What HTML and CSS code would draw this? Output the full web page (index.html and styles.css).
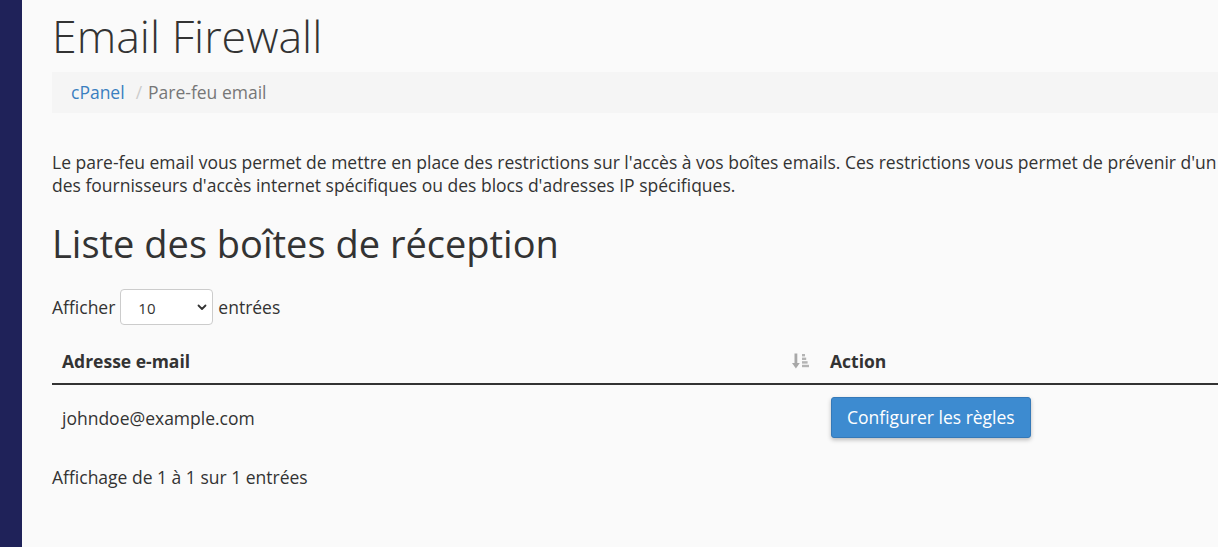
FILE: index.html
```html
<!DOCTYPE html>
<html lang="fr">
<head>
<meta charset="utf-8">
<title>Email Firewall</title>
<link rel="stylesheet" href="styles.css">
</head>
<body>
<div class="layout">
  <aside class="sidebar"></aside>
  <main class="main">
    <h1 class="page-title">Email Firewall</h1>
    <nav class="breadcrumb">
      <a class="crumb-link" href="#">cPanel</a>
      <span class="crumb-sep">/</span>
      <span class="crumb-current">Pare-feu email</span>
    </nav>
    <p class="intro">Le pare-feu email vous permet de mettre en place des restrictions sur l'accès à vos boîtes emails. Ces restrictions vous permet de prévenir d'un accès des fournisseurs d'accès internet spécifiques ou des blocs d'adresses IP spécifiques.</p>
    <h2 class="section-title">Liste des boîtes de réception</h2>
    <div class="length">
      <span>Afficher</span>
      <div class="select">
        <span class="select-value">10</span>
        <svg class="chev" width="10" height="7" viewBox="0 0 10 7"><path d="M1.5 1.5 L5 5 L8.5 1.5" fill="none" stroke="#333" stroke-width="1.8" stroke-linecap="round" stroke-linejoin="round"/></svg>
      </div>
      <span>entrées</span>
    </div>
    <div class="table">
      <div class="thead">
        <div class="th th-email">
          <span>Adresse e-mail</span>
          <svg class="sort" width="17" height="18" viewBox="0 0 17 18">
            <rect x="2.5" y="1.5" width="2.8" height="10" fill="#a8a8a8"/>
            <path d="M0 11 L7.8 11 L3.9 16.5 Z" fill="#a8a8a8"/>
            <rect x="10" y="2" width="3" height="2.4" fill="#b4b4b4"/>
            <rect x="10" y="5.6" width="4.2" height="2.4" fill="#b4b4b4"/>
            <rect x="10" y="9.2" width="5.6" height="2.4" fill="#b4b4b4"/>
            <rect x="10" y="12.8" width="7" height="2.4" fill="#b4b4b4"/>
          </svg>
        </div>
        <div class="th th-action">Action</div>
      </div>
      <div class="tr">
        <div class="td td-email">johndoe@example.com</div>
        <div class="td td-action"><button class="btn">Configurer les règles</button></div>
      </div>
    </div>
    <p class="info">Affichage de 1 à 1 sur 1 entrées</p>
  </main>
</div>
</body>
</html>
```

FILE: styles.css
```css
html, body {
  margin: 0;
  padding: 0;
  background: #fafafa;
  overflow: hidden;
}
body {
  font-family: "Open Sans", "Noto Sans", sans-serif;
  color: #333;
  font-size: 17.5px;
  line-height: 1.4286;
}
.layout {
  display: flex;
  min-height: 547px;
}
.sidebar {
  flex: 0 0 22px;
  background: #1f2259;
}
.main {
  flex: 0 0 1240px;
  padding: 0 0 0 30px;
}
.page-title {
  margin: 0;
  padding-top: 4px;
  font-size: 44.7px;
  font-weight: 300;
  line-height: 64px;
  color: #333;
}
.breadcrumb {
  margin-top: 4px;
  background: #f5f5f5;
  height: 41px;
  display: flex;
  align-items: center;
  padding-left: 19px;
  font-size: 17.5px;
}
.crumb-link {
  color: #3a7fc0;
  text-decoration: none;
}
.crumb-sep {
  color: #ccc;
  margin: 0 6px 0 11px;
}
.crumb-current {
  color: #777;
}
.intro {
  margin: 38px 0 0;
  line-height: 23px;
}
.section-title {
  margin: 20px 0 0;
  font-size: 38px;
  font-weight: 400;
  line-height: 52px;
}
.length {
  margin-top: 20px;
  display: flex;
  align-items: center;
  gap: 5px;
}
.select {
  width: 93px;
  height: 36px;
  box-sizing: border-box;
  border: 1px solid #ccc;
  border-radius: 4px;
  background: #fff;
  display: flex;
  align-items: center;
  justify-content: space-between;
  padding: 0 5px 0 17px;
  font-size: 15px;
}
.select-value {
  padding-top: 4px;
}
.table {
  margin-top: 14px;
}
.thead, .tr {
  display: flex;
}
.thead {
  border-bottom: 2px solid #333;
  height: 44px;
  align-items: center;
}
.th {
  font-weight: 700;
  padding: 0 10px;
  box-sizing: border-box;
}
.th-email {
  width: 769px;
  display: flex;
  justify-content: space-between;
  align-items: center;
}
.sort {
  margin-right: 2px;
}
.th-action, .td-action {
  padding-left: 9px;
}
.tr {
  height: 66px;
  align-items: center;
}
.td {
  padding: 0 10px;
  box-sizing: border-box;
}
.td-email {
  width: 769px;
}
.td-action {
  margin-top: -2px;
}
.btn {
  font-family: "Open Sans", "Noto Sans", sans-serif;
  font-size: 17.5px;
  color: #fff;
  background: #3d8bd0;
  border: 1px solid #3579b8;
  border-radius: 3px;
  height: 41px;
  padding: 0 15px;
  box-shadow: 0 2px 4px rgba(0, 0, 0, 0.25);
}
.info {
  margin: 14px 0 0;
}
```
